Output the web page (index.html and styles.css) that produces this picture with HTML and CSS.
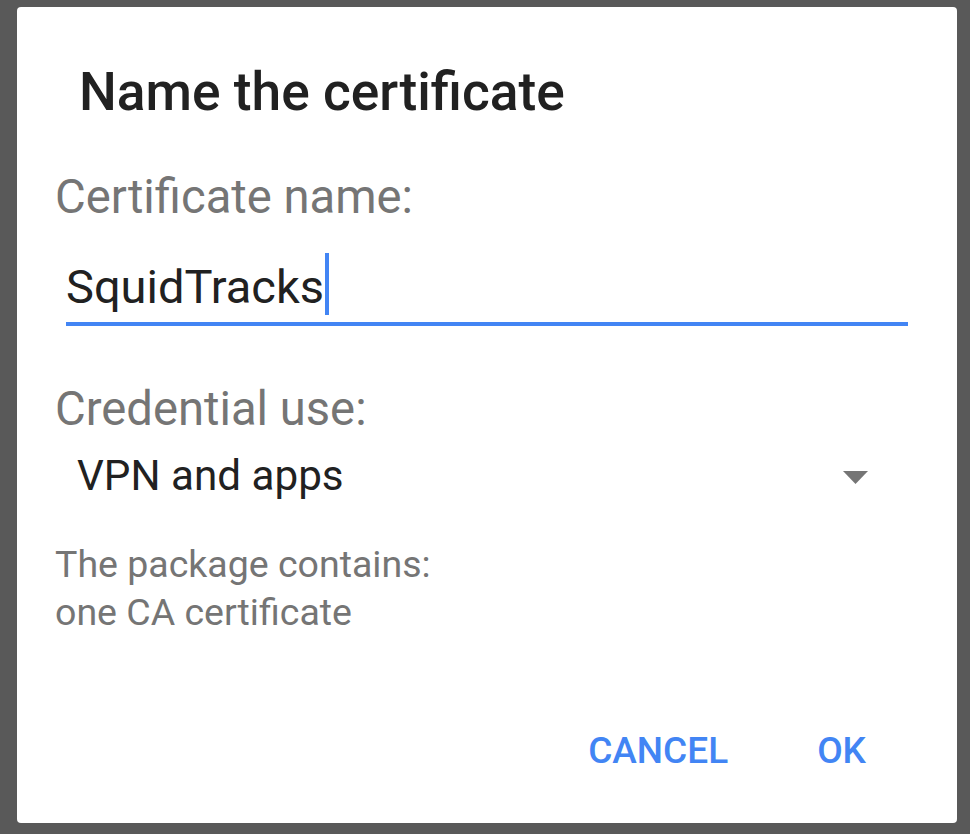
FILE: index.html
```html
<!DOCTYPE html>
<html>
<head>
<meta charset="utf-8">
<link rel="stylesheet" href="styles.css">
</head>
<body>
<div class="dialog">
  <h1 class="title">Name the certificate</h1>
  <div class="label label-name">Certificate name:</div>
  <div class="field"><span class="field-text">SquidTracks</span><span class="cursor"></span></div>
  <div class="label label-use">Credential use:</div>
  <div class="spinner">
    <span class="spinner-text">VPN and apps</span>
    <svg class="arrow" width="25" height="13" viewBox="0 0 25 13"><polygon points="0,0 25,0 12.5,13" fill="#757575"/></svg>
  </div>
  <div class="info">The package contains:<br>one CA certificate</div>
  <div class="actions">
    <span class="btn">CANCEL</span>
    <span class="btn">OK</span>
  </div>
</div>
</body>
</html>
```
FILE: styles.css
```css
html, body {
  margin: 0;
  padding: 0;
  background: #595959;
  height: 100%;
  overflow: hidden;
}
body {
  font-family: Roboto, "Noto Sans", sans-serif;
  padding-top: 7px;
  padding-left: 17px;
}
.dialog {
  box-sizing: border-box;
  width: 940px;
  height: 816px;
  background: #ffffff;
  border-radius: 4px;
  padding: 53px 49px 50px 38px;
  display: flex;
  flex-direction: column;
}
.title {
  margin: 0;
  padding-left: 24px;
  font-size: 53.3px;
  font-weight: 500;
  line-height: 64px;
  color: #212121;
}
.label {
  font-size: 47.2px;
  line-height: 56px;
  color: #757575;
}
.label-name { margin-top: 45px; }
.label-use { margin-top: 55px; }
.field {
  margin-top: 28px;
  margin-left: 11px;
  padding-bottom: 13px;
  border-bottom: 4px solid #4285f4;
  font-size: 47px;
  line-height: 56px;
  color: #212121;
  height: 56px;
}
.cursor {
  display: inline-block;
  width: 4px;
  height: 62px;
  margin-left: 1px;
  background: #4285f4;
  vertical-align: -12px;
}
.spinner {
  margin-top: 12px;
  padding-left: 22px;
  display: flex;
  align-items: center;
  justify-content: space-between;
  font-size: 42.2px;
  line-height: 54px;
  color: #212121;
}
.arrow {
  margin-right: 40px;
  margin-top: 2px;
}
.info {
  margin-top: 37px;
  font-size: 37.5px;
  line-height: 48px;
  color: #757575;
}
.actions {
  margin-top: auto;
  display: flex;
  justify-content: flex-end;
  gap: 89px;
  padding-right: 42px;
}
.btn {
  font-size: 37px;
  font-weight: 500;
  line-height: 44px;
  color: #4285f4;
}
```
